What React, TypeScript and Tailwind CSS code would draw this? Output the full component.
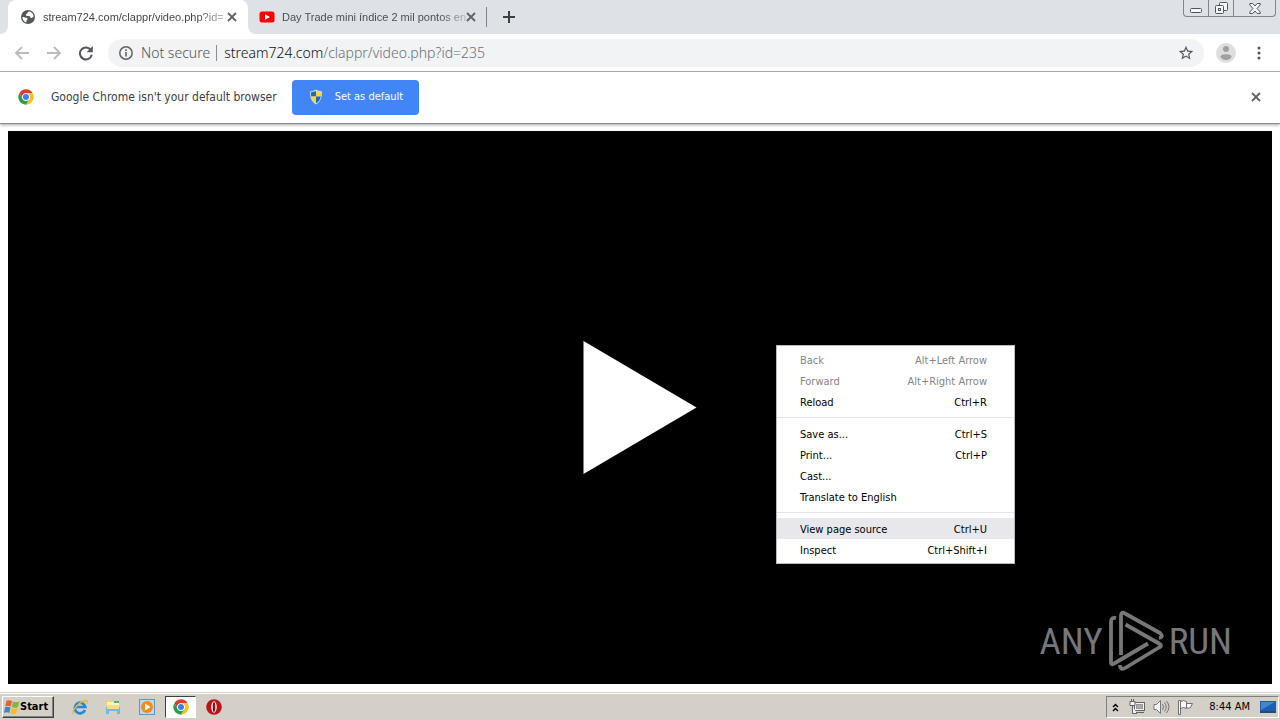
import React from "react";

function Cross({ size = 10, color = "#5f6368", width = 1.8 }: { size?: number; color?: string; width?: number }) {
  return (
    <svg width={size} height={size} viewBox="0 0 10 10" aria-hidden="true">
      <path d="M1 1l8 8M9 1l-8 8" stroke={color} strokeWidth={width} fill="none" />
    </svg>
  );
}

function GlobeIcon() {
  return (
    <svg className="shrink-0" width="14" height="14" viewBox="2 2 20 20" aria-hidden="true">
      <circle cx="12" cy="12" r="10" fill="#54575b" />
      <path d="M4 12c3 0 4 1 6.500 1.500 1.500.5 1 2.500-.5 3l-.5 3.500C6.500 19 4 16 4 12z" fill="#fff" />
      <path d="M13 4.200c-2 1-1 2.300-3 3.300-1.500.8-1.500 3 .5 3h3c1.500 0 1.500 3 3.500 3 1.500 0 1.500-1.500 3-2 0-4-3-7-7-7.300z" fill="#fff" />
    </svg>
  );
}

function ChromeIcon() {
  return (
    <svg width="16" height="16" viewBox="0 0 48 48" aria-hidden="true">
      <circle cx="24" cy="24" r="23" fill="#fff" />
      <path d="M4.080 12.500A23 23 0 0 1 43.920 12.500H24a11.500 11.500 0 0 0-9.960 17.250z" fill="#e33b2e" />
      <path d="M43.920 12.500A23 23 0 0 1 24 47l9.960-17.250A11.500 11.500 0 0 0 24 12.500z" fill="#fbc116" />
      <path d="M24 47A23 23 0 0 1 4.080 12.500l9.960 17.250a11.500 11.500 0 0 0 19.920 0z" fill="#2a9f48" />
      <circle cx="24" cy="24" r="11.500" fill="#fff" />
      <circle cx="24" cy="24" r="9" fill="#3f7fe8" />
    </svg>
  );
}

function ShieldIcon() {
  return (
    <svg width="14" height="16" viewBox="0 0 14 16" aria-hidden="true">
      <path d="M7 .5c2 1.400 4 1.700 6 1.700 0 6-1 10.300-6 13.300C2 12.500 1 8.200 1 2.200 3 2.200 5 1.900 7 .5z" fill="#c9dcef" />
      <path d="M7 2v5.500H2.200C2 6 2 4.500 2 3.200 4 3.100 5.500 2.800 7 2z" fill="#2467b8" />
      <path d="M7 2v5.500h4.800c.2-1.500.2-3 .2-4.300-2-.1-3.500-.4-5-1.200zM7 14.300V7.500H2.200c.6 3 2 5.200 4.800 6.800z" fill="#ffd92e" />
      <path d="M7 14.300V7.500h4.800c-.6 3-2 5.200-4.800 6.800z" fill="#2467b8" />
    </svg>
  );
}

function TabStrip() {
  return (
    <div className="flex h-[34px] text-[11px]">
      <div className="w-2 rounded-br-lg bg-[#dee1e6]" />
      <div className="w-60 bg-[#dee1e6]">
        <div className="flex h-full items-center rounded-t-lg bg-white pr-[11px] pl-[13px]">
          <GlobeIcon />
          <span className="ml-2 whitespace-nowrap bg-linear-to-r from-[#3c4043] from-85% to-[#c4c6c8] bg-clip-text font-['Liberation_Sans',sans-serif] text-transparent">
            stream724.com/clappr/video.php?id=
          </span>
          <button aria-label="Close tab" className="ml-auto"><Cross /></button>
        </div>
      </div>
      <div className="flex min-w-0 flex-1 items-center rounded-bl-lg bg-[#dee1e6]">
        <div className="flex w-[238px] items-center pr-[10px] pl-[11px]">
          <svg className="shrink-0" width="16" height="12" viewBox="0 0 16 12" aria-hidden="true">
            <rect width="15" height="11" x=".5" y=".5" rx="2.500" fill="#f00" />
            <path d="M6 3.200v5.600L11 6z" fill="#fff" />
          </svg>
          <span className="ml-[7px] whitespace-nowrap bg-linear-to-r from-[#45494d] from-85% to-[#b4b7bb] bg-clip-text font-['Liberation_Sans',sans-serif] text-transparent">
            Day Trade mini índice 2 mil pontos en
          </span>
          <button aria-label="Close tab" className="ml-auto"><Cross /></button>
        </div>
        <span className="h-5 w-px bg-[#80858b]" />
        <button aria-label="New tab" className="ml-4">
          <svg width="12" height="12" viewBox="0 0 12 12" aria-hidden="true">
            <path d="M6 0v12M0 6h12" stroke="#3c4043" strokeWidth="2" />
          </svg>
        </button>
        <div className="mr-1 ml-auto flex h-[17px] self-start rounded-b border border-t-0 border-[#80868e] text-[#50555c]">
          <button aria-label="Minimize" className="flex w-6 items-center justify-center">
            <svg width="12" height="14" viewBox="0 0 12 14" aria-hidden="true">
              <rect x=".5" y="7.500" width="11" height="4" rx="1" fill="#f5f6f8" stroke="currentColor" />
            </svg>
          </button>
          <button aria-label="Restore" className="flex w-[26px] items-center justify-center border-x border-[#80868e]">
            <svg width="13" height="14" viewBox="0 0 13 14" aria-hidden="true" fill="#f5f6f8" stroke="currentColor">
              <rect x="4.500" y="1.500" width="8" height="8" rx="1" />
              <rect x=".5" y="4.500" width="8" height="8" rx="1" />
              <rect x="3.500" y="7.500" width="2" height="2" />
            </svg>
          </button>
          <button aria-label="Close window" className="flex w-[41px] items-center justify-center">
            <svg width="12" height="11" viewBox="0 0 12 11" aria-hidden="true">
              <path d="M.8.500h3L6 3 8.200.500h3v1.500L8 5.500l3.200 3.500v1.500h-3L6 8l-2.200 2.500h-3V9L4 5.500.8 2z" fill="#f5f6f8" stroke="currentColor" />
            </svg>
          </button>
        </div>
      </div>
    </div>
  );
}

function Toolbar() {
  return (
    <div className="flex h-[38px] items-center border-b border-[#b1b3b5] pr-[19px] pl-[14px]">
      <button aria-label="Back">
        <svg width="16" height="16" viewBox="0 0 16 16" aria-hidden="true"><path d="M15 8H2M8 2L2 8l6 6" stroke="#b9bbbe" strokeWidth="1.800" fill="none" /></svg>
      </button>
      <button aria-label="Forward" className="ml-4">
        <svg width="16" height="16" viewBox="0 0 16 16" aria-hidden="true"><path d="M1 8h13M8 2l6 6-6 6" stroke="#b9bbbe" strokeWidth="1.800" fill="none" /></svg>
      </button>
      <button aria-label="Reload" className="ml-4">
        <svg width="16" height="16" viewBox="0 0 16 16" aria-hidden="true">
          <path d="M13 5.200A6 6 0 1 0 13.800 9.800" stroke="#54585c" strokeWidth="2" fill="none" />
          <path d="M14.800 1v6.200H8.600z" fill="#54585c" />
        </svg>
      </button>
      <div className="ml-[14px] flex h-7 min-w-0 flex-1 items-center rounded-full bg-[#f1f3f4] px-[10px] font-['Noto_Sans',sans-serif] text-[14px] font-light">
        <svg className="ml-px" width="14" height="14" viewBox="0 0 14 14" aria-hidden="true">
          <circle cx="7" cy="7" r="6.200" fill="none" stroke="#5f6368" strokeWidth="1.500" />
          <path d="M7 6v4.500M7 3.300v1.600" stroke="#5f6368" strokeWidth="1.600" />
        </svg>
        <span className="ml-2 whitespace-nowrap text-[#50545a]">Not secure</span>
        <span className="ml-[6px] h-4 w-px bg-[#8b8f93]" />
        <span className="ml-[7px] flex-1 whitespace-nowrap text-[#6b6f74]"><span className="text-[#101114]">stream724.com</span>/clappr/video.php?id=235</span>
        <button aria-label="Bookmark this tab">
          <svg width="16" height="16" viewBox="1 1 22 22" aria-hidden="true">
            <path d="M22 9.240l-7.190-.62L12 2 9.190 8.630 2 9.240l5.460 4.730L5.820 21 12 17.270 18.180 21l-1.630-7.030zM12 15.400l-3.760 2.270 1-4.280-3.320-2.880 4.380-.38L12 6.100l1.710 4.040 4.380.38-3.320 2.880 1 4.280z" fill="#54585c" />
          </svg>
        </button>
      </div>
      <button aria-label="Profile" className="ml-3">
        <svg width="20" height="20" viewBox="0 0 20 20" aria-hidden="true">
          <circle cx="10" cy="10" r="10" fill="#dedede" />
          <circle cx="10" cy="6" r="3" fill="#a0a0a0" />
          <path d="M4.500 13.500c0-3 11-3 11 0-.6 4.500-10.400 4.500-11 0z" fill="#a0a0a0" />
        </svg>
      </button>
      <button aria-label="Menu" className="ml-[21px]">
        <svg width="4" height="14" viewBox="0 0 4 14" aria-hidden="true" fill="#54585c"><circle cx="2" cy="2" r="1.500" /><circle cx="2" cy="7" r="1.500" /><circle cx="2" cy="12" r="1.500" /></svg>
      </button>
    </div>
  );
}

function InfoBar() {
  return (
    <div className="flex h-[52px] items-center border-b border-[#8a8a8a] pr-[19px] pb-px pl-[18px] shadow-[0_1px_3px_rgba(0,0,0,0.35)]">
      <ChromeIcon />
      <span className="ml-[17px] text-[12px] text-[#3c4043]">Google Chrome isn't your default browser</span>
      <button className="ml-[15px] flex h-[35px] items-center rounded bg-[#4285f4] pr-4 pl-[17px] text-[11px] text-white">
        <ShieldIcon />
        <span className="ml-3">Set as default</span>
      </button>
      <button aria-label="Dismiss" className="ml-auto"><Cross /></button>
    </div>
  );
}

type Entry = { label: string; keys?: string; off?: boolean; hot?: boolean };
const groups: Entry[][] = [
  [
    { label: "Back", keys: "Alt+Left Arrow", off: true },
    { label: "Forward", keys: "Alt+Right Arrow", off: true },
    { label: "Reload", keys: "Ctrl+R" },
  ],
  [
    { label: "Save as...", keys: "Ctrl+S" },
    { label: "Print...", keys: "Ctrl+P" },
    { label: "Cast..." },
    { label: "Translate to English" },
  ],
  [
    { label: "View page source", keys: "Ctrl+U", hot: true },
    { label: "Inspect", keys: "Ctrl+Shift+I" },
  ],
];

function ContextMenu() {
  return (
    <div role="menu" className="absolute top-[345px] left-[776px] w-[239px] border border-[#bababa] bg-white py-[3px] text-[11px]">
      {groups.map((group, i) => (
        <React.Fragment key={i}>
          {i > 0 && <div role="separator" className="my-[5px] h-px bg-[#e4e4e7]" />}
          {group.map((e) => (
            <button
              key={e.label}
              role="menuitem"
              disabled={e.off}
              className={`flex h-[21px] w-full items-center justify-between pt-[3px] pr-[27px] pl-[23px] ${e.off ? "text-[#858585]" : "text-black"} ${e.hot ? "bg-[#e8e8ec]" : ""}`}
            >
              <span>{e.label}</span>
              <span>{e.keys}</span>
            </button>
          ))}
        </React.Fragment>
      ))}
    </div>
  );
}

function Watermark() {
  return (
    <div className="absolute right-10 bottom-3 flex items-center font-['Roboto_Condensed','Liberation_Sans_Narrow','Roboto',sans-serif] text-[37px] leading-none text-[#777]">
      <span>ANY</span>
      <svg className="mx-[5px]" width="56" height="62" viewBox="0 0 56 62" aria-hidden="true" fill="none" stroke="#777" strokeWidth="3.800" strokeLinejoin="round">
        <path d="M8 8Q3 7 3 12V52Q3 56 7 53L40 33.500" />
        <path d="M13 45V6Q13 1 17 3.500L52 23Q56 27 51 28" />
        <path d="M17.500 14.500L51 33.500Q55 35.500 51 37.500L18 57.500Q12 61 12 55" />
      </svg>
      <span>RUN</span>
    </div>
  );
}

function Taskbar() {
  return (
    <footer className="flex h-[27px] items-center border-t border-white bg-[#d4d0c8] pl-[2px] text-[11px] shadow-[0_-1px_0_#d4d0c8]">
      <button className="flex h-[22px] w-[52px] items-center border border-t-white border-r-[#404040] border-b-[#404040] border-l-white pl-px font-bold shadow-[inset_-1px_-1px_0_#808080]">
        <svg width="16" height="16" viewBox="0 0 16 16" aria-hidden="true">
          <path d="M2.500 2Q5 .5 8 2L6.800 7.500Q4 6 1.200 7.500z" fill="#e8602c" />
          <path d="M9 2.500Q12 4 15.500 2.500L14 8Q11 9.500 7.800 8z" fill="#7cb83c" />
          <path d="M1 8.500Q4 7 6.500 8.500L5.300 14Q3 12.500 0 14z" fill="#4085d4" />
          <path d="M7.500 9Q10.500 10.500 13.700 9L12.300 14.500Q9 16 6.300 14.500z" fill="#f6bd2b" />
        </svg>
        <span>Start</span>
      </button>
      <button aria-label="Internet Explorer" className="ml-[18px]">
        <svg width="16" height="16" viewBox="0 0 16 16" aria-hidden="true" fill="none">
          <path d="M13 11A5.300 5.300 0 1 1 13.300 8H4" stroke="#238bd6" strokeWidth="2.700" />
          <path d="M1.500 15C-1 11.500 9 1 14.500 1.500c1 .3 1 1.800.2 3" stroke="#e7b83d" strokeWidth="1.400" />
        </svg>
      </button>
      <button aria-label="File Explorer" className="ml-[17px]">
        <svg width="16" height="16" viewBox="0 0 16 16" aria-hidden="true">
          <path d="M1 1h5l1 2h7v10H1z" fill="#efd271" />
          <path d="M2 3h12v3H2z" fill="#fff4b9" /><path d="M9 2h5v2H9z" fill="#65aa70" />
          <path d="M1 8h14v7h-3v-3H4v3H1z" fill="#74b8de" /><path d="M2 6h12v4H2z" fill="#f3dd86" />
        </svg>
      </button>
      <button aria-label="Media Player" className="ml-[18px]">
        <svg width="16" height="16" viewBox="0 0 16 16" aria-hidden="true">
          <rect x=".5" y=".5" width="15" height="15" fill="#b9d8f2" stroke="#5c96cf" />
          <circle cx="8" cy="8" r="6" fill="#f28a1c" /><path d="M6 4.500v7L11.500 8z" fill="#fff" />
        </svg>
      </button>
      <button aria-label="Chrome" className="ml-[10px] flex h-[22px] w-[31px] items-center justify-center border border-t-[#404040] border-r-white border-b-white border-l-[#404040] bg-white"><ChromeIcon /></button>
      <button aria-label="Opera" className="ml-[10px]">
        <svg width="16" height="16" viewBox="0 0 16 16" aria-hidden="true"><circle cx="8" cy="8" r="7.800" fill="#b5161c" /><ellipse cx="8" cy="8" rx="2.700" ry="5.800" fill="#fff" /><ellipse cx="8" cy="8" rx="1.300" ry="5" fill="#8c1015" /></svg>
      </button>
      <div className="mr-px ml-auto flex h-[22px] items-center border border-t-[#808080] border-r-white border-b-white border-l-[#808080] pr-[2px] pl-[5px]">
        <button aria-label="Show hidden icons">
          <svg width="7" height="9" viewBox="0 0 7 9" aria-hidden="true"><path d="M1 4l2.500-2.500L6 4M1 8l2.500-2.500L6 8" stroke="#000" strokeWidth="1.500" fill="none" /></svg>
        </button>
        <svg className="ml-[10px]" width="17" height="16" viewBox="0 0 17 16" aria-hidden="true" stroke="#656565" fill="#f5f5f5">
          <rect x="5.500" y="3.500" width="10" height="8" /><rect x="7.500" y="5.500" width="6" height="4" fill="#aaa" stroke="#999" />
          <path d="M7 13.500h8M1 2.500h5v4H1zM2.500 0v2M4.500 0v2M3.500 7v7.500H8" />
        </svg>
        <svg className="ml-[7px]" width="17" height="16" viewBox="0 0 17 16" aria-hidden="true" stroke="#777" fill="#f5f5f5">
          <path d="M1 5.500h2.500l4-4v13l-4-4H1z" /><path d="M9.500 5q2 3 0 6M11.500 3.500q3.500 4.500 0 9M13.500 2q5 6 0 12" fill="none" />
        </svg>
        <svg className="ml-[7px]" width="17" height="16" viewBox="0 0 17 16" aria-hidden="true" stroke="#707070" fill="#f8f8f8">
          <path d="M1.500 1.500h2v14h-2zM3.500 2.500q3-2 6 0v7q-3-2-6 0zM9.500 4.500h6l-2 4q-2 1.500-4 0z" />
        </svg>
        <span className="ml-[15px] whitespace-nowrap">8:44 AM</span>
        <button aria-label="Show desktop" className="ml-[10px]">
          <svg width="16" height="14" viewBox="0 0 16 14" aria-hidden="true"><path d="M0 1h16v10H0z" fill="#1c5db5" /><path d="M1 2h14L1 10z" fill="#4585cf" /><path d="M0 11h16v2H0z" fill="#264a78" /></svg>
        </button>
      </div>
    </footer>
  );
}

export default function App() {
  return (
    <div className="relative flex min-h-screen flex-col bg-white font-['DejaVu_Sans_Condensed','DejaVu_Sans',sans-serif] text-black">
      <header>
        <TabStrip />
        <Toolbar />
        <InfoBar />
      </header>
      <main className="flex flex-1 flex-col px-2 pt-[7px] pb-[9px]">
        <div className="relative flex flex-1 items-center justify-center bg-black">
          <button aria-label="Play">
            <svg width="114" height="134" viewBox="0 0 114 134" aria-hidden="true"><path d="M.5 0l113 66.500L.5 133z" fill="#fff" /></svg>
          </button>
          <Watermark />
        </div>
      </main>
      <Taskbar />
      <ContextMenu />
    </div>
  );
}
